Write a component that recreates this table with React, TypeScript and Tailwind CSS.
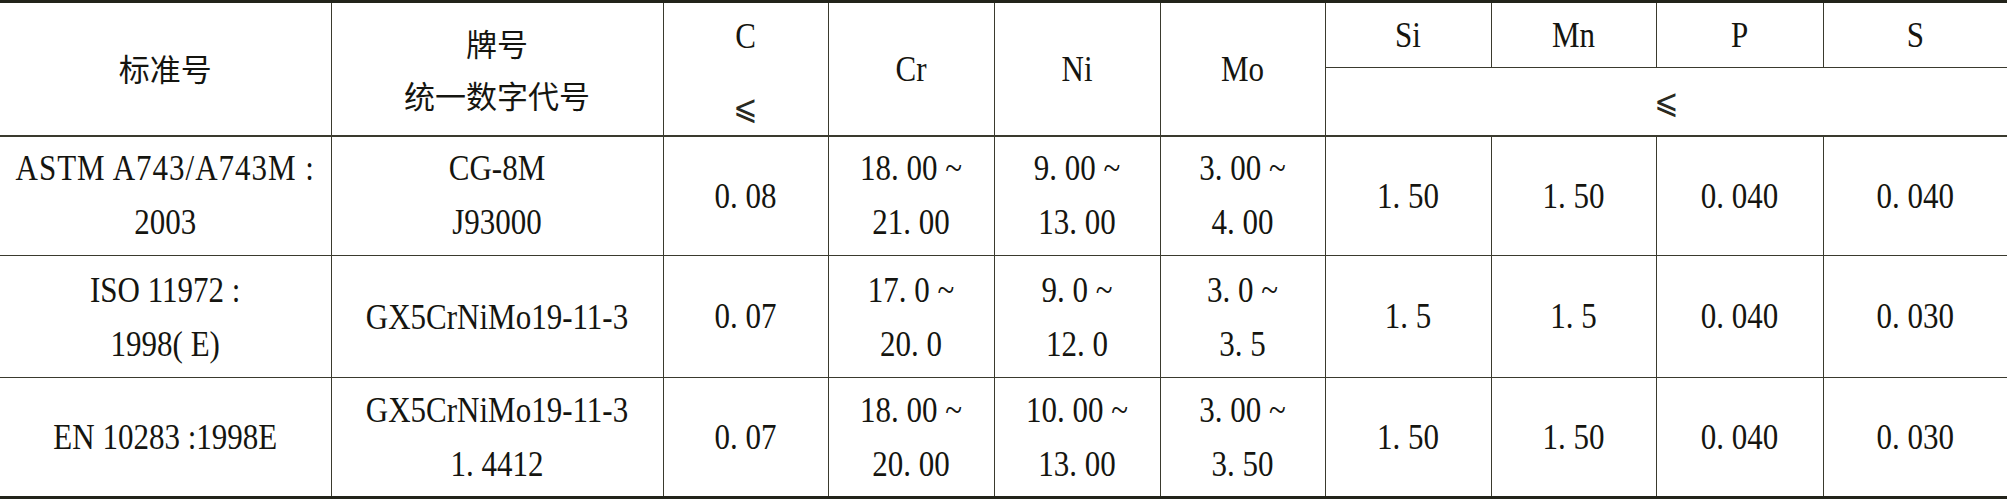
const cols = [331, 332, 165, 166, 166, 165, 166, 165, 167, 184];

type Row = {
  std: string[];
  wide?: boolean;
  grade: string[];
  c: string;
  cr: string[];
  ni: string[];
  mo: string[];
  si: string;
  mn: string;
  p: string;
  s: string;
};

const rows: Row[] = [
  {
    std: ['ASTM A743/A743M :', '2003'],
    wide: true,
    grade: ['CG-8M', 'J93000'],
    c: '0. 08',
    cr: ['18. 00 ~', '21. 00'],
    ni: ['9. 00 ~', '13. 00'],
    mo: ['3. 00 ~', '4. 00'],
    si: '1. 50',
    mn: '1. 50',
    p: '0. 040',
    s: '0. 040',
  },
  {
    std: ['ISO 11972 :', '1998( E)'],
    grade: ['GX5CrNiMo19-11-3'],
    c: '0. 07',
    cr: ['17. 0 ~', '20. 0'],
    ni: ['9. 0 ~', '12. 0'],
    mo: ['3. 0 ~', '3. 5'],
    si: '1. 5',
    mn: '1. 5',
    p: '0. 040',
    s: '0. 030',
  },
  {
    std: ['EN 10283 :1998E'],
    grade: ['GX5CrNiMo19-11-3', '1. 4412'],
    c: '0. 07',
    cr: ['18. 00 ~', '20. 00'],
    ni: ['10. 00 ~', '13. 00'],
    mo: ['3. 00 ~', '3. 50'],
    si: '1. 50',
    mn: '1. 50',
    p: '0. 040',
    s: '0. 030',
  },
];

const cell = 'border border-[#3a3a2e] text-center align-middle p-0 font-normal';

// scanned page: glyphs sit a little taller than plain Times
function T({ children, className = '' }: { children: string; className?: string }) {
  return (
    <span
      className={`inline-block whitespace-pre scale-y-[1.15] font-['Liberation_Serif','Times_New_Roman',serif] ${className}`}
    >
      {children}
    </span>
  );
}

function Lines({ items, first = '' }: { items: string[]; first?: string }) {
  return (
    <div className="flex flex-col items-center leading-[54px]">
      {items.map((t, i) => (
        <T key={i} className={i === 0 ? first : ''}>
          {t}
        </T>
      ))}
    </div>
  );
}

function Zh({ children }: { children: string }) {
  return <span className="font-['Noto_Sans_CJK_SC',sans-serif] text-[31px]">{children}</span>;
}

const Le = () => (
  <span className="inline-block font-['DejaVu_Sans',serif] text-[34px] leading-none scale-x-[0.85] text-[#2a2a22]">
    ⩽
  </span>
);

export default function App() {
  return (
    <div className="w-[2007px] h-[500px] bg-white overflow-hidden">
      <table className="table-fixed border-collapse w-[2007px] text-[#151510] text-[31px] border-t-[3px] border-b-[3px] border-t-[#22231a] border-b-[#22231a]">
        <colgroup>
          {cols.map((w, i) => (
            <col key={i} style={{ width: w }} />
          ))}
        </colgroup>
        <thead>
          <tr className="h-[66px]">
            <th rowSpan={2} className={`${cell} border-l-0`}>
              <Zh>标准号</Zh>
            </th>
            <th rowSpan={2} className={cell}>
              <div className="flex flex-col items-center leading-[52px]">
                <Zh>牌号</Zh>
                <Zh>统一数字代号</Zh>
              </div>
            </th>
            <th rowSpan={2} className={cell}>
              <div className="flex flex-col items-center gap-[30px]">
                <T>C</T>
                <Le />
              </div>
            </th>
            <th rowSpan={2} className={cell}>
              <T>Cr</T>
            </th>
            <th rowSpan={2} className={cell}>
              <T>Ni</T>
            </th>
            <th rowSpan={2} className={cell}>
              <T>Mo</T>
            </th>
            <th className={cell}>
              <T>Si</T>
            </th>
            <th className={cell}>
              <T>Mn</T>
            </th>
            <th className={cell}>
              <T>P</T>
            </th>
            <th className={`${cell} border-r-0`}>
              <T>S</T>
            </th>
          </tr>
          <tr className="h-[68px]">
            <th colSpan={4} className={`${cell} border-r-0`}>
              <Le />
            </th>
          </tr>
        </thead>
        <tbody>
          {rows.map((r, i) => (
            <tr
              key={i}
              className={
                i === 0
                  ? 'h-[120px] border-t-2 border-t-[#3a3a2e]'
                  : i === 1
                    ? 'h-[122px]'
                    : 'h-[120px]'
              }
            >
              <td className={`${cell} border-l-0`}>
                <Lines items={r.std} first={r.wide ? 'tracking-[1px]' : ''} />
              </td>
              <td className={cell}>
                <Lines items={r.grade} />
              </td>
              <td className={cell}>
                <T>{r.c}</T>
              </td>
              <td className={cell}>
                <Lines items={r.cr} />
              </td>
              <td className={cell}>
                <Lines items={r.ni} />
              </td>
              <td className={cell}>
                <Lines items={r.mo} />
              </td>
              <td className={cell}>
                <T>{r.si}</T>
              </td>
              <td className={cell}>
                <T>{r.mn}</T>
              </td>
              <td className={cell}>
                <T>{r.p}</T>
              </td>
              <td className={`${cell} border-r-0`}>
                <T>{r.s}</T>
              </td>
            </tr>
          ))}
        </tbody>
      </table>
    </div>
  );
}
